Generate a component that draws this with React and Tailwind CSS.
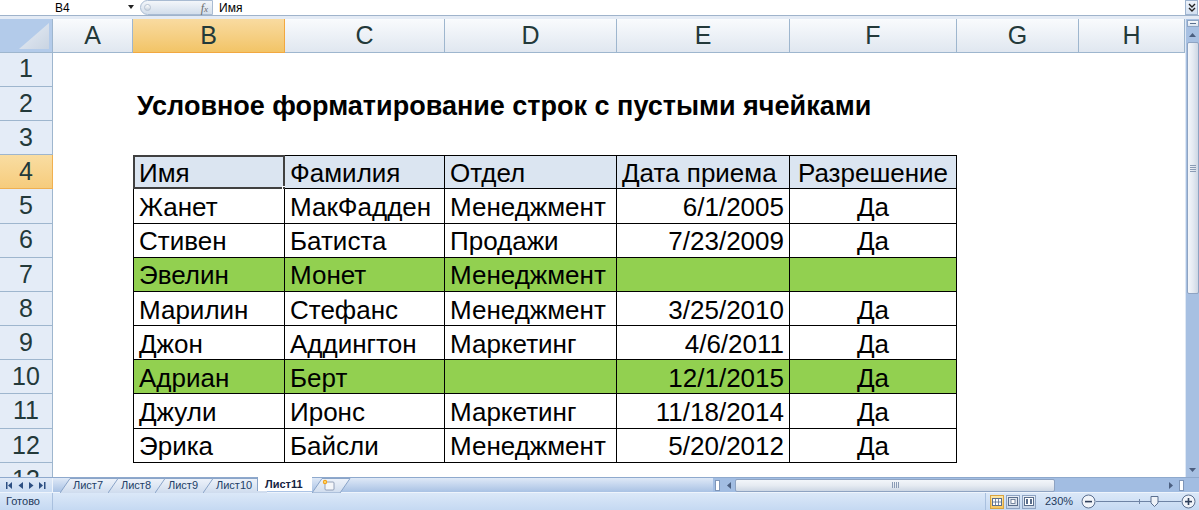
import React from 'react';

const data = {
  4: ['Имя', 'Фамилия', 'Отдел', 'Дата приема', 'Разрешение'],
  5: ['Жанет', 'МакФадден', 'Менеджмент', '6/1/2005', 'Да'],
  6: ['Стивен', 'Батиста', 'Продажи', '7/23/2009', 'Да'],
  7: ['Эвелин', 'Монет', 'Менеджмент', '', ''],
  8: ['Марилин', 'Стефанс', 'Менеджмент', '3/25/2010', 'Да'],
  9: ['Джон', 'Аддингтон', 'Маркетинг', '4/6/2011', 'Да'],
  10: ['Адриан', 'Берт', '', '12/1/2015', 'Да'],
  11: ['Джули', 'Иронс', 'Маркетинг', '11/18/2014', 'Да'],
  12: ['Эрика', 'Байсли', 'Менеджмент', '5/20/2012', 'Да'],
};
const green = { 7: true, 10: true };
const tableW = ['w-[152px]', 'w-[160px]', 'w-[172px]', 'w-[173px]', 'w-[167px]'];

const cols = [
  { k: 'A', w: 'w-[80px]' },
  { k: 'B', w: 'w-[152px]' },
  { k: 'C', w: 'w-[160px]' },
  { k: 'D', w: 'w-[172px]' },
  { k: 'E', w: 'w-[173px]' },
  { k: 'F', w: 'w-[167px]' },
  { k: 'G', w: 'w-[122px]' },
  { k: 'H', w: 'w-[106px]' },
];

function TCell({ i, r, text }) {
  const header = r === 4;
  const bg = header ? 'bg-[#dbe5f1]' : green[r] ? 'bg-[#92d050]' : 'bg-white';
  let align = 'justify-start pl-[5px]';
  if (i === 3 && !header) align = 'justify-end pr-[5px]';
  if (i === 4) align = 'justify-center';
  const bl = i === 0 ? 'border-l' : '';
  const bt = header ? 'border-t' : '';
  const sel = header && i === 0;
  return (
    <div
      className={`relative ${tableW[i]} shrink-0 h-full flex items-center pt-[3px] ${align} ${bg} border-r border-b ${bl} ${bt} border-black whitespace-nowrap text-[26px] text-black`}
    >
      {text}
      {sel && (
        <>
          <div className="absolute -left-px -top-px -right-px -bottom-px border-[2px] border-[#404040]" />
          <div className="absolute -right-[4px] -bottom-[4px] w-[6px] h-[6px] bg-[#404040] border border-white" />
        </>
      )}
    </div>
  );
}

function RowHead({ n }) {
  const sel = n === 4;
  return (
    <div
      className={`w-[53px] shrink-0 h-full flex items-center justify-center border-r border-b text-[25px] text-[#23393a] ${
        sel
          ? 'bg-linear-to-b from-[#f9dda2] to-[#f6cc7c] border-[#f0b050]'
          : 'bg-[#e4ecf7] border-[#9eb6ce]'
      }`}
    >
      {n}
    </div>
  );
}

function Row({ n }) {
  const cells = data[n];
  return (
    <div className="flex h-[34.2px] shrink-0">
      <RowHead n={n} />
      <div className="w-[80px] shrink-0" />
      {cells ? (
        cells.map((t, i) => <TCell key={i} i={i} r={n} text={t} />)
      ) : n === 2 ? (
        <div className="w-[152px] shrink-0 flex items-center pl-[4px] pt-[4px] whitespace-nowrap font-bold text-[27px] text-black overflow-visible">
          Условное форматирование строк с пустыми ячейками
        </div>
      ) : null}
    </div>
  );
}

function ColHeaders() {
  return (
    <div className="flex h-[33.6px] shrink-0">
      <div className="w-[53px] shrink-0 h-full bg-[#b3cbea] border-r border-b border-[#9eb6ce] relative">
        <svg className="absolute right-[3px] bottom-[3px]" width="30" height="26" viewBox="0 0 30 26">
          <defs>
            <linearGradient id="ctri" x1="0" y1="0" x2="1" y2="1">
              <stop offset="0" stopColor="#e8eef6" />
              <stop offset="1" stopColor="#c9d4e2" />
            </linearGradient>
          </defs>
          <polygon points="30,0 30,26 0,26" fill="url(#ctri)" />
        </svg>
      </div>
      {cols.map((c) => (
        <div
          key={c.k}
          className={`${c.w} shrink-0 h-full flex items-center justify-center border-r border-b text-[25px] text-[#23393a] ${
            c.k === 'B'
              ? 'bg-linear-to-b from-[#f9dba0] to-[#f2c466] border-[#f2a840]'
              : 'bg-linear-to-b from-[#f9fbfd] to-[#e0e7f0] border-[#9eb6ce]'
          }`}
        >
          {c.k}
        </div>
      ))}
    </div>
  );
}

function FormulaBar() {
  return (
    <div className="shrink-0">
      <div className="h-[15px] flex items-center bg-white relative">
        <div className="w-[140px] h-full flex items-center pl-[55px] text-[12px] text-black shrink-0 relative">
          B4
          <svg className="absolute left-[128px] top-[5px]" width="6" height="4" viewBox="0 0 6 4">
            <polygon points="0,0 6,0 3,4" fill="#222" />
          </svg>
        </div>
        <div className="w-[73px] h-[15px] shrink-0 rounded-l-full border border-[#a9bbd2] bg-linear-to-b from-[#f3f6fa] to-[#d3deeb] flex items-center justify-between pl-[3px] pr-[4px]">
          <div className="w-[7px] h-[7px] rounded-full bg-linear-to-b from-[#ffffff] to-[#c9d3df] border border-[#b7c3d3]" />
          <span className="font-['Liberation_Serif',serif] italic text-[12px] leading-none text-[#6b6b6b]">
            f<span className="text-[9px]">x</span>
          </span>
        </div>
        <div className="flex-1 h-full flex items-center pl-[6px] text-[12px] text-black">Имя</div>
        <div className="w-[13px] h-[15px] shrink-0 mr-px bg-linear-to-b from-[#eef3fa] to-[#d3e0f1] border border-[#9db3cf] flex items-center justify-center">
          <svg width="8" height="9" viewBox="0 0 8 9">
            <polyline points="1,1 4,4 7,1" fill="none" stroke="#222" strokeWidth="1.4" />
            <polyline points="1,5 4,8 7,5" fill="none" stroke="#222" strokeWidth="1.4" />
          </svg>
        </div>
      </div>
      <div className="h-px bg-[#9fb3cb]" />
      <div className="h-[3px] bg-[#e4ebf5]" />
    </div>
  );
}

function VScroll() {
  return (
    <div className="w-[14px] shrink-0 h-full bg-[#a7c0e2] border-l border-[#dfe8f4] flex flex-col items-center">
      <div className="mt-[1px] w-[12px] h-[7px] bg-linear-to-b from-[#f7f9fc] to-[#dbe4ef] border border-[#8ea5c4] flex items-center justify-center">
        <div className="w-[6px] h-px bg-[#5a6f8e]" />
      </div>
      <div className="h-[15px] flex items-center justify-center">
        <svg width="7" height="4" viewBox="0 0 7 4">
          <polygon points="0,4 7,4 3.5,0" fill="#4b5f80" />
        </svg>
      </div>
      <div className="w-[12px] h-[252px] rounded-[2px] bg-linear-to-r from-[#f3f6fa] via-[#e4eaf2] to-[#cdd7e4] border border-[#8ea3c2] flex items-center justify-center">
        <div className="flex flex-col gap-[1px]">
          <div className="w-[6px] h-px bg-[#8a9bb5]" />
          <div className="w-[6px] h-px bg-[#8a9bb5]" />
          <div className="w-[6px] h-px bg-[#8a9bb5]" />
          <div className="w-[6px] h-px bg-[#8a9bb5]" />
        </div>
      </div>
      <div className="flex-1" />
      <div className="h-[14px] flex items-center justify-center">
        <svg width="7" height="4" viewBox="0 0 7 4">
          <polygon points="0,0 7,0 3.5,4" fill="#4b5f80" />
        </svg>
      </div>
    </div>
  );
}

function Tab({ w, label }) {
  return (
    <div className="relative h-full shrink-0 flex items-center" style={{ width: w }}>
      <svg className="absolute left-0 top-0" width={w + 10} height="15" viewBox={`0 0 ${w + 10} 15`}>
        <defs>
          <linearGradient id="tabg" x1="0" y1="0" x2="0" y2="1">
            <stop offset="0" stopColor="#eef3fa" />
            <stop offset="1" stopColor="#cfdcee" />
          </linearGradient>
        </defs>
        <polygon points={`0,15 10,0.5 ${w + 10},0.5 ${w + 10},15`} fill="url(#tabg)" />
        <polyline points={`0,15 10,0.5 ${w + 10},0.5`} fill="none" stroke="#8aa4c8" strokeWidth="1" />
      </svg>
      <span className="relative pl-[13px] text-[11px] text-[#233f68] leading-none">{label}</span>
    </div>
  );
}

function NavArrows() {
  return (
    <div className="w-[53px] shrink-0 h-full flex items-center justify-around px-[3px] border-r border-[#eef4fb]">
      <svg width="7" height="7" viewBox="0 0 7 7">
        <rect x="0" y="0" width="1.5" height="7" fill="#2d4f82" />
        <polygon points="6,0 6,7 2,3.5" fill="#2d4f82" />
      </svg>
      <svg width="5" height="7" viewBox="0 0 5 7">
        <polygon points="5,0 5,7 0.5,3.5" fill="#2d4f82" />
      </svg>
      <svg width="5" height="7" viewBox="0 0 5 7">
        <polygon points="0,0 0,7 4.5,3.5" fill="#2d4f82" />
      </svg>
      <svg width="7" height="7" viewBox="0 0 7 7">
        <polygon points="0,0 0,7 4,3.5" fill="#2d4f82" />
        <rect x="5" y="0" width="1.5" height="7" fill="#2d4f82" />
      </svg>
    </div>
  );
}

function TabRow() {
  return (
    <div className="h-[15px] shrink-0 flex border-t border-[#8ea9cd] bg-linear-to-b from-[#b3cae8] to-[#98b4dc]">
      <div className="bg-linear-to-b from-[#dfe9f7] to-[#c9dbf2] flex h-full">
        <NavArrows />
      </div>
      <div className="w-[660px] shrink-0 h-full flex pl-[7px] bg-linear-to-b from-[#dfe9f7] to-[#a9c2e4]">
        <Tab w={48} label="Лист7" />
        <Tab w={47} label="Лист8" />
        <Tab w={48} label="Лист9" />
        <Tab w={54} label="Лист10" />
        <div className="relative w-[55px] h-full shrink-0 bg-white border-l border-[#8aa4c8] flex items-center pl-[7px] -mt-px">
          <span className="text-[11px] font-bold text-[#15233f] leading-none">Лист11</span>
        </div>
        <div className="relative w-[38px] h-full shrink-0">
          <svg className="absolute left-0 top-0" width="40" height="15" viewBox="0 0 40 15">
            <defs>
              <linearGradient id="ntab" x1="0" y1="0" x2="0" y2="1">
                <stop offset="0" stopColor="#eef3fa" />
                <stop offset="1" stopColor="#cfdcee" />
              </linearGradient>
            </defs>
            <polygon points="0,15 10,0.5 38,0.5 28,15" fill="url(#ntab)" stroke="#8aa4c8" strokeWidth="1" />
            <rect x="13" y="4" width="9" height="8" rx="1" fill="#f4f6f9" stroke="#7d8ea8" strokeWidth="0.8" />
            <circle cx="13" cy="4" r="2.2" fill="#f2a31c" />
            <circle cx="13" cy="4" r="1" fill="#ffe27a" />
          </svg>
        </div>
        <div className="flex-1" />
      </div>
      <div className="flex-1 h-full flex items-center bg-[#a2bde2]">
        <div className="w-[5px] h-[11px] ml-[2px] bg-white border border-[#7f96b8]" />
        <div className="w-[12px] flex items-center justify-center ml-[3px]">
          <svg width="4" height="7" viewBox="0 0 4 7">
            <polygon points="4,0 4,7 0,3.5" fill="#4b5f80" />
          </svg>
        </div>
        <div className="w-[320px] h-[13px] rounded-[2px] bg-linear-to-b from-[#f3f6fa] via-[#e6ebf2] to-[#cdd7e4] border border-[#8ea3c2] flex items-center justify-center">
          <div className="flex gap-[1px]">
            <div className="w-px h-[6px] bg-[#8a9bb5]" />
            <div className="w-px h-[6px] bg-[#8a9bb5]" />
            <div className="w-px h-[6px] bg-[#8a9bb5]" />
            <div className="w-px h-[6px] bg-[#8a9bb5]" />
          </div>
        </div>
        <div className="flex-1" />
        <div className="w-[12px] flex items-center justify-center">
          <svg width="4" height="7" viewBox="0 0 4 7">
            <polygon points="0,0 0,7 4,3.5" fill="#4b5f80" />
          </svg>
        </div>
        <div className="w-[5px] h-[11px] mr-[15px] ml-[2px] bg-white border border-[#7f96b8]" />
      </div>
    </div>
  );
}

function StatusBar() {
  return (
    <div className="h-[18px] shrink-0 flex items-center bg-linear-to-b from-[#dbe8f8] to-[#c5d9f2] border-t border-[#eef4fc] text-[11px] text-[#1e395b]">
      <div className="w-[53px] shrink-0 h-full flex items-center pl-[6px] border-r border-[#a9c0de]">Готово</div>
      <div className="flex-1" />
      <div className="w-[214px] shrink-0 h-full border-l border-[#a9c0de] flex items-center pl-[4px] gap-[2px]">
        <div className="w-[14px] h-[14px] bg-linear-to-b from-[#fde7a8] to-[#f7c55b] border border-[#d9a43f] flex items-center justify-center">
          <svg width="10" height="8" viewBox="0 0 10 8">
            <rect x="0.5" y="0.5" width="9" height="7" fill="#fff" stroke="#5a6e8c" strokeWidth="1" />
            <line x1="3.5" y1="0" x2="3.5" y2="8" stroke="#5a6e8c" strokeWidth="0.8" />
            <line x1="6.5" y1="0" x2="6.5" y2="8" stroke="#5a6e8c" strokeWidth="0.8" />
            <line x1="0" y1="4" x2="10" y2="4" stroke="#5a6e8c" strokeWidth="0.8" />
          </svg>
        </div>
        <div className="w-[14px] h-[14px] bg-linear-to-b from-[#e9eff7] to-[#c5d3e6] border border-[#8ea3c2] flex items-center justify-center">
          <svg width="10" height="9" viewBox="0 0 10 9">
            <rect x="0.5" y="0.5" width="9" height="8" fill="#dfe5ee" stroke="#5a6e8c" strokeWidth="1" />
            <rect x="3" y="2.5" width="4" height="4" fill="#fff" stroke="#5a6e8c" strokeWidth="0.8" />
          </svg>
        </div>
        <div className="w-[14px] h-[14px] bg-linear-to-b from-[#e9eff7] to-[#c5d3e6] border border-[#8ea3c2] flex items-center justify-center">
          <svg width="10" height="9" viewBox="0 0 10 9">
            <rect x="0.5" y="0.5" width="9" height="8" fill="#fff" stroke="#5a6e8c" strokeWidth="1" />
            <rect x="2" y="2" width="2" height="5" fill="#5a6e8c" />
            <rect x="6" y="2" width="2" height="5" fill="#5a6e8c" />
          </svg>
        </div>
        <span className="ml-[7px] w-[34px] shrink-0">230%</span>
        <div className="flex items-center">
          <svg width="15" height="15" viewBox="0 0 15 15">
            <circle cx="7.5" cy="7.5" r="6.5" fill="#f1f4f9" stroke="#5b6f8f" strokeWidth="1" />
            <rect x="4" y="6.8" width="7" height="1.6" fill="#2f3f5a" />
          </svg>
          <div className="w-[85px] h-[11px] relative flex items-center">
            <div className="w-full h-px bg-[#6f84a5]" />
            <div className="absolute left-[43px] top-[3px] w-px h-[5px] bg-[#6f84a5]" />
            <svg className="absolute left-[54px] top-0" width="9" height="11" viewBox="0 0 9 11">
              <path d="M1 0.5 H8 V7 L4.5 10.5 L1 7 Z" fill="#eef2f8" stroke="#5b6f8f" strokeWidth="1" />
            </svg>
          </div>
          <svg width="15" height="15" viewBox="0 0 15 15">
            <circle cx="7.5" cy="7.5" r="6.5" fill="#f1f4f9" stroke="#5b6f8f" strokeWidth="1" />
            <rect x="4" y="6.8" width="7" height="1.6" fill="#2f3f5a" />
            <rect x="6.7" y="4" width="1.6" height="7" fill="#2f3f5a" />
          </svg>
        </div>
      </div>
    </div>
  );
}

export default function App() {
  const rows = [1, 2, 3, 4, 5, 6, 7, 8, 9, 10, 11, 12, 13];
  return (
    <div className="w-[1199px] h-[510px] overflow-hidden bg-white flex flex-col font-['Liberation_Sans',Arial,sans-serif]">
      <FormulaBar />
      <div className="flex h-[458px] shrink-0">
        <div className="w-[1185px] shrink-0 h-full flex flex-col overflow-hidden">
          <ColHeaders />
          {rows.map((n) => (
            <Row key={n} n={n} />
          ))}
        </div>
        <VScroll />
      </div>
      <TabRow />
      <StatusBar />
    </div>
  );
}
